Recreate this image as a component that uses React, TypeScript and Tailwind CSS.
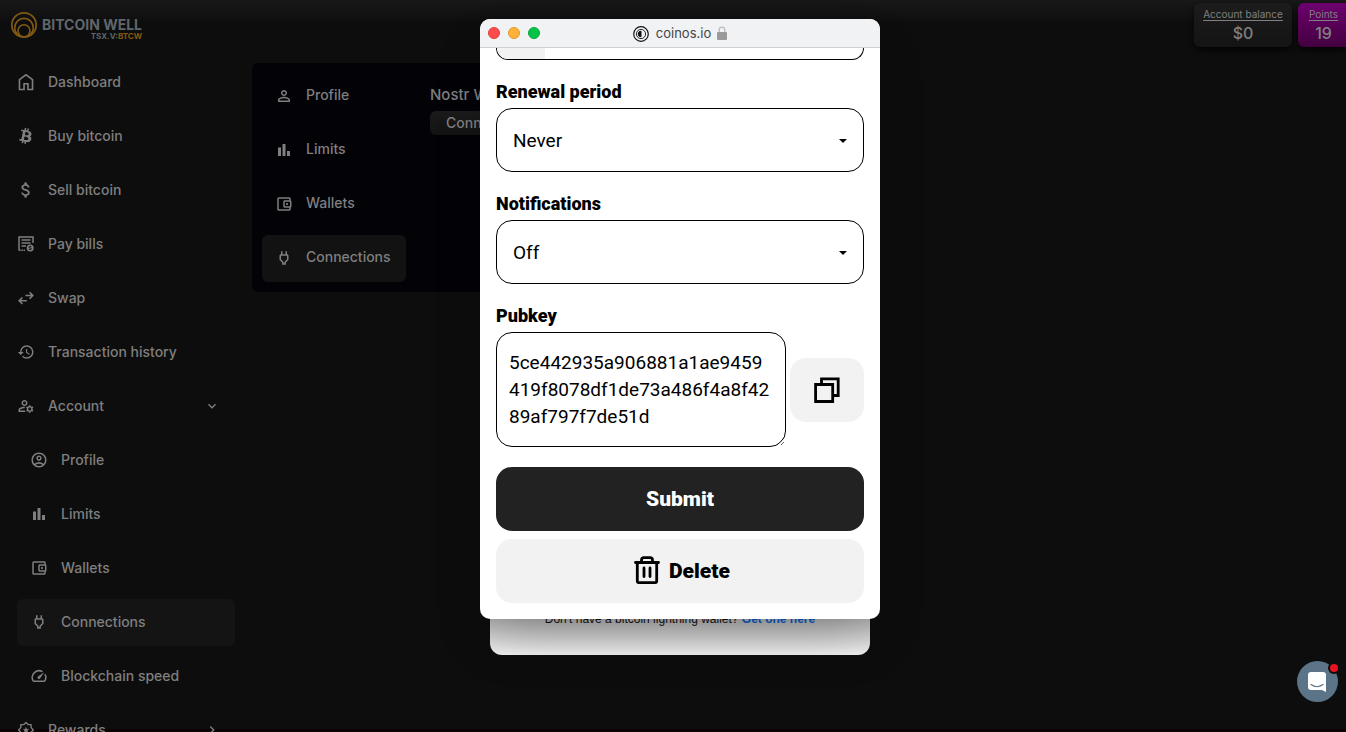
import type { ReactNode } from "react";
import {
  MdAttachMoney,
  MdChevronRight,
  MdExpandMore,
  MdHistory,
  MdOutlineAccountBalanceWallet,
  MdOutlineAccountCircle,
  MdOutlineManageAccounts,
  MdOutlinePower,
  MdOutlineSpeed,
  MdPersonOutline,
} from "react-icons/md";
import { FaBtc } from "react-icons/fa";

const HomeIcon = () => (
  <svg viewBox="0 -960 960 960" className="size-[22px] shrink-0" fill="currentColor">
    <path d="M230-190h130v-250h240v250h130v-375L480-752 230-565v375Zm-70 70v-480l320-240 320 240v480H530v-250H430v250H160Z" />
  </svg>
);

const BillIcon = () => (
  <svg viewBox="0 0 18 18" className="size-[18px]" fill="none" stroke="currentColor" strokeWidth="1.5">
    <path d="M16 8V2H2v13.500" />
    <path d="M4.500 5h9M4.500 8h9M4.500 11h4.500" />
    <path d="M2 15.300h6" strokeDasharray="1.600 .7" />
    <circle cx="13.200" cy="13" r="3.500" fill="currentColor" stroke="none" />
    <path d="M14.500 11.500h-2.300v1.500h1.900v1.500h-2.400" stroke="#0d0d0d" strokeWidth=".8" />
  </svg>
);

const SwapIcon = () => (
  <svg viewBox="0 0 18 18" className="size-[18px]" fill="none" stroke="currentColor" strokeWidth="1.6">
    <path d="M8.500 6.500h7.300M12.600 3.300l3.200 3.200-3.200 3.200M9.800 11.800H2.200M5.400 8.600l-3.200 3.200L5.400 15" />
  </svg>
);

const BarsIcon = () => (
  <svg viewBox="0 0 18 18" className="size-[18px]" fill="currentColor">
    <path d="M3 6.500h3V15H3zM7.500 3h3v12h-3zM12 10h3v5h-3z" />
  </svg>
);

const RewardIcon = () => (
  <svg viewBox="0 0 18 18" className="size-[18px]" fill="none" stroke="currentColor" strokeWidth="1.4" strokeLinejoin="round">
    <path d="M9 1.600l2.100 2h3v3L16.300 9l-2.200 2.300v3h-3L9 16.400l-2.200-2.100h-3v-3L1.700 9l2.100-2.400v-3h3z" />
    <path d="M9 5.800l.9 2.200 2.300.2-1.700 1.500.5 2.300-2-1.200-2 1.200.5-2.300-1.700-1.500 2.300-.2z" fill="currentColor" stroke="none" />
  </svg>
);

const icon = "size-[18px]";

type Item = { label: string; icon: ReactNode; trailing?: ReactNode; sub?: boolean; active?: boolean };

const items: Item[] = [
  { label: "Dashboard", icon: <HomeIcon /> },
  { label: "Buy bitcoin", icon: <FaBtc className="size-4 rotate-12" /> },
  { label: "Sell bitcoin", icon: <MdAttachMoney className="size-5 shrink-0" /> },
  { label: "Pay bills", icon: <BillIcon /> },
  { label: "Swap", icon: <SwapIcon /> },
  { label: "Transaction history", icon: <MdHistory className={icon} /> },
  { label: "Account", icon: <MdOutlineManageAccounts className={icon} />, trailing: <MdExpandMore className="size-4" /> },
  { label: "Profile", icon: <MdOutlineAccountCircle className={icon} />, sub: true },
  { label: "Limits", icon: <BarsIcon />, sub: true },
  { label: "Wallets", icon: <MdOutlineAccountBalanceWallet className={icon} />, sub: true },
  { label: "Connections", icon: <MdOutlinePower className={icon} />, sub: true, active: true },
  { label: "Blockchain speed", icon: <MdOutlineSpeed className={icon} />, sub: true },
  { label: "Rewards", icon: <RewardIcon />, trailing: <MdChevronRight className="size-4" /> },
];

const tabs: Item[] = [
  { label: "Profile", icon: <MdPersonOutline className={icon} /> },
  { label: "Limits", icon: <BarsIcon /> },
  { label: "Wallets", icon: <MdOutlineAccountBalanceWallet className={icon} /> },
  { label: "Connections", icon: <MdOutlinePower className={icon} />, active: true },
];

function Logo() {
  return (
    <a href="#" className="flex h-[55px] items-center gap-1 pl-[10px]">
      <svg viewBox="0 0 28 28" className="-mt-1.5 size-7" fill="none" stroke="#805a15">
        <circle cx="14" cy="14" r="12.200" strokeWidth="1.700" />
        <circle cx="14" cy="16.700" r="9.300" strokeWidth="1.600" />
        <circle cx="14" cy="19.800" r="6" strokeWidth="1.600" />
      </svg>
      <span className="flex flex-col items-end pt-0.5">
        <span className="text-[14px] leading-[14px] font-bold text-[#5f666c]">BITCOIN WELL</span>
        <span className="text-[8px] leading-[8px] font-bold text-[#5f666c]">
          TSX.V:<span className="text-[#85590f]">BTCW</span>
        </span>
      </span>
    </a>
  );
}

function Sidebar() {
  return (
    <aside className="w-[252px] shrink-0">
      <Logo />
      <nav className="flex flex-col gap-[7px] px-[17px] pt-1">
        {items.map((it) => (
          <a
            key={it.label}
            href="#"
            className={`flex h-[47px] shrink-0 items-center gap-[13px] rounded-md pr-[15px] pb-0.5 ${it.sub ? "pl-[13px]" : ""} ${it.active ? "bg-[#141414]" : ""}`}
          >
            <span className="flex w-[18px] justify-center">{it.icon}</span>
            <span className="grow">{it.label}</span>
            {it.trailing}
          </a>
        ))}
      </nav>
    </aside>
  );
}

function ConnectionsPanel() {
  return (
    <section className="mt-[63px] mr-[484px] flex h-[229px] grow rounded-md bg-[#020207]">
      <nav className="flex w-[154px] flex-col gap-[7px] pt-[10px] pl-[10px]">
        {tabs.map((t) => (
          <a
            key={t.label}
            href="#"
            className={`flex h-[47px] items-center gap-[13px] rounded-md pb-0.5 pl-[13px] ${t.active ? "bg-[#121212]" : ""}`}
          >
            <span className="flex w-[18px] justify-center">{t.icon}</span>
            <span className="-mt-0.5">{t.label}</span>
          </a>
        ))}
      </nav>
      <div className="pt-5 pl-6">
        <h2 className="text-[15px] leading-6">Nostr Wallet</h2>
        <button className="mt-1 h-6 rounded-md bg-linear-to-b from-[#1b1b1b] to-[#131313] px-4 pb-0.5">Connect</button>
      </div>
    </section>
  );
}

function Stat({ label, value, className }: { label: string; value: string; className: string }) {
  return (
    <a href="#" className={`flex h-11 flex-col items-center rounded-md pt-1 text-[#808080] shadow-md shadow-black/60 ${className}`}>
      <span className="text-[10px] leading-[14px] font-normal underline underline-offset-2">{label}</span>
      <span className="text-base leading-6 font-medium">{value}</span>
    </a>
  );
}

function SelectField({ id, label, value, options }: { id: string; label: string; value: string; options: string[] }) {
  return (
    <div>
      <label htmlFor={id} className="block pb-[3px] text-[18px] leading-[26px] font-black">
        {label}
      </label>
      <div className="relative">
        <select
          id={id}
          defaultValue={value}
          className="h-16 w-full appearance-none rounded-2xl border border-black bg-white px-4 pt-0.5 text-[19px]"
        >
          {options.map((o) => (
            <option key={o}>{o}</option>
          ))}
        </select>
        <svg viewBox="0 0 8 4" className="pointer-events-none absolute top-[31px] right-[17px] h-1 w-2">
          <path d="M0 0h8L4 4z" />
        </svg>
      </div>
    </div>
  );
}

function PopupWindow() {
  return (
    <div className="absolute top-0 left-0 w-full overflow-hidden rounded-[10px] bg-white font-['Roboto',sans-serif] font-normal text-black shadow-2xl">
      <header className="flex h-[29px] items-center border-b border-[#cfd0d1] bg-[#f1f2f4] px-2">
        <div className="flex w-[120px] gap-2">
          <span className="size-3 rounded-full border border-[#e33e3d] bg-[#fe4b4b]" />
          <span className="size-3 rounded-full border border-[#e09a2c] bg-[#ffb139]" />
          <span className="size-3 rounded-full border border-[#07a73d] bg-[#04c447]" />
        </div>
        <div className="flex grow items-center justify-center gap-[7px] pt-0.5 text-[13px] text-[#444]">
          <svg viewBox="0 0 16 16" className="size-4" fill="none" stroke="#111">
            <circle cx="8" cy="8" r="7.300" strokeWidth="1.200" />
            <circle cx="8" cy="8" r="4.600" strokeWidth=".9" />
            <path d="M8 5.200a2.800 2.800 0 0 0 0 5.600z" fill="#111" />
          </svg>
          <span className="font-['Inter',sans-serif]">coinos.io</span>
          <svg viewBox="0 0 10 14" className="-mt-0.5 -ml-px h-[14px] w-[10px]">
            <path d="M2.200 7V4a2.800 2.800 0 0 1 5.600 0v3" fill="none" stroke="#bcbcbc" strokeWidth="1.300" />
            <rect y="6" width="10" height="8" rx="1" fill="#9a9a9a" />
          </svg>
        </div>
        <div className="w-[120px]" />
      </header>
      <div className="px-4 pb-4">
        <div className="h-3 overflow-hidden rounded-b-2xl border border-t-0 border-black">
          <div className="h-3 w-12 bg-[#f2f2f2]" />
        </div>
        <form className="flex flex-col gap-[19px] pt-[19px]" onSubmit={(e) => e.preventDefault()}>
          <SelectField id="renewal" label="Renewal period" value="Never" options={["Never", "Daily", "Weekly", "Monthly"]} />
          <SelectField id="notifications" label="Notifications" value="Off" options={["Off", "On"]} />
          <div>
            <label htmlFor="pubkey" className="block pb-[3px] text-[18px] leading-[26px] font-black">
              Pubkey
            </label>
            <div className="flex items-center gap-1">
              <textarea
                id="pubkey"
                className="h-[115px] min-w-0 grow rounded-2xl border border-black py-4 pr-[14px] pl-3 text-[19px] leading-[27px] break-all"
                defaultValue="5ce442935a906881a1ae9459419f8078df1de73a486f4a8f4289af797f7de51d"
              />
              <button type="button" aria-label="Copy" className="flex h-16 w-[74px] items-center justify-center rounded-2xl bg-[#f2f2f2]">
                <svg viewBox="0 0 26 26" className="size-[26px]" fill="none" stroke="#000" strokeWidth="2.800">
                  <path d="M7.500 7.500V1.800h16.700v16.700h-5.500" />
                  <path d="M1.600 7.500h17.100v17H1.600z" />
                </svg>
              </button>
            </div>
          </div>
          <div className="flex flex-col gap-2 pt-px text-[21px] font-black">
            <button type="submit" className="h-16 rounded-2xl bg-[#222] pt-0.5 text-white">
              Submit
            </button>
            <button type="button" className="flex h-16 items-center justify-center gap-[9px] rounded-2xl bg-[#f2f2f2] pt-0.5 pl-1">
              <svg viewBox="0 0 26 28" className="-mt-1 h-7 w-[26px]" fill="none" stroke="#000" strokeWidth="2.800" strokeLinecap="round" strokeLinejoin="round">
                <path d="M1.500 6.500h23M3.300 6.500v18.500q0 1.600 1.600 1.600h16.200q1.600 0 1.600-1.600V6.500M7.500 6.500V4q0-2.400 2.400-2.400h6.200q2.400 0 2.400 2.400v2.500M10 12v8.500M16 12v8.500" />
              </svg>
              Delete
            </button>
          </div>
        </form>
      </div>
    </div>
  );
}

export default function App() {
  return (
    <div className="relative flex h-screen overflow-hidden bg-[#0d0d0d] bg-linear-to-b from-[#181818] to-[#0d0d0d] to-[24px] font-['Inter',sans-serif] text-[14px] font-medium text-[#7f7f7f]">
      <div className="absolute inset-x-0 bottom-0 h-[3px] bg-[#0b0305]" />
      <div className="relative flex grow">
        <Sidebar />
        <main className="flex grow items-start">
          <ConnectionsPanel />
        </main>
      </div>

      <div className="absolute top-[3px] right-0 flex gap-[6px]">
        <Stat label="Account balance" value="$0" className="w-[98px] bg-linear-to-b from-[#1c1c1c] to-[#141414]" />
        <Stat label="Points" value="19" className="w-[48px] rounded-r-none bg-linear-to-b from-[#6e0070] to-[#43003f] pl-[3px]" />
      </div>

      <div className="absolute top-[19px] left-1/2 -ml-[193px] h-[636px] w-[400px]">
        <div className="mx-[10px] flex h-full flex-col justify-end overflow-hidden rounded-xl bg-linear-to-b from-[#b0b0b0] from-[600px] to-[#f2f2f2] pb-7 text-center">
          <p className="font-['Liberation_Sans',sans-serif] text-[12px] leading-4 font-normal text-[#111]">
            Don't have a bitcoin lightning wallet?{" "}
            <a href="#" className="font-bold text-[#0b57c4]">
              Get one here
            </a>
          </p>
        </div>
        <PopupWindow />
      </div>

      <button aria-label="Open chat" className="absolute right-2 bottom-[30px] flex size-[41px] items-center justify-center rounded-full bg-[#5b7488]">
        <svg viewBox="0 0 20 22" className="size-[22px]">
          <path d="M3 1h12q3 0 3 3v17l-4-2H3q-3 0-3-3V4q0-3 3-3z" fill="#fff" />
          <path d="M3 13.500q6 4.500 12 0" fill="none" stroke="#5b7488" strokeWidth="1.200" strokeLinecap="round" />
        </svg>
        <span className="absolute top-[3px] right-0 size-2 rounded-full bg-[#e8131d] ring-2 ring-[#0d0d0d]" />
      </button>
    </div>
  );
}
